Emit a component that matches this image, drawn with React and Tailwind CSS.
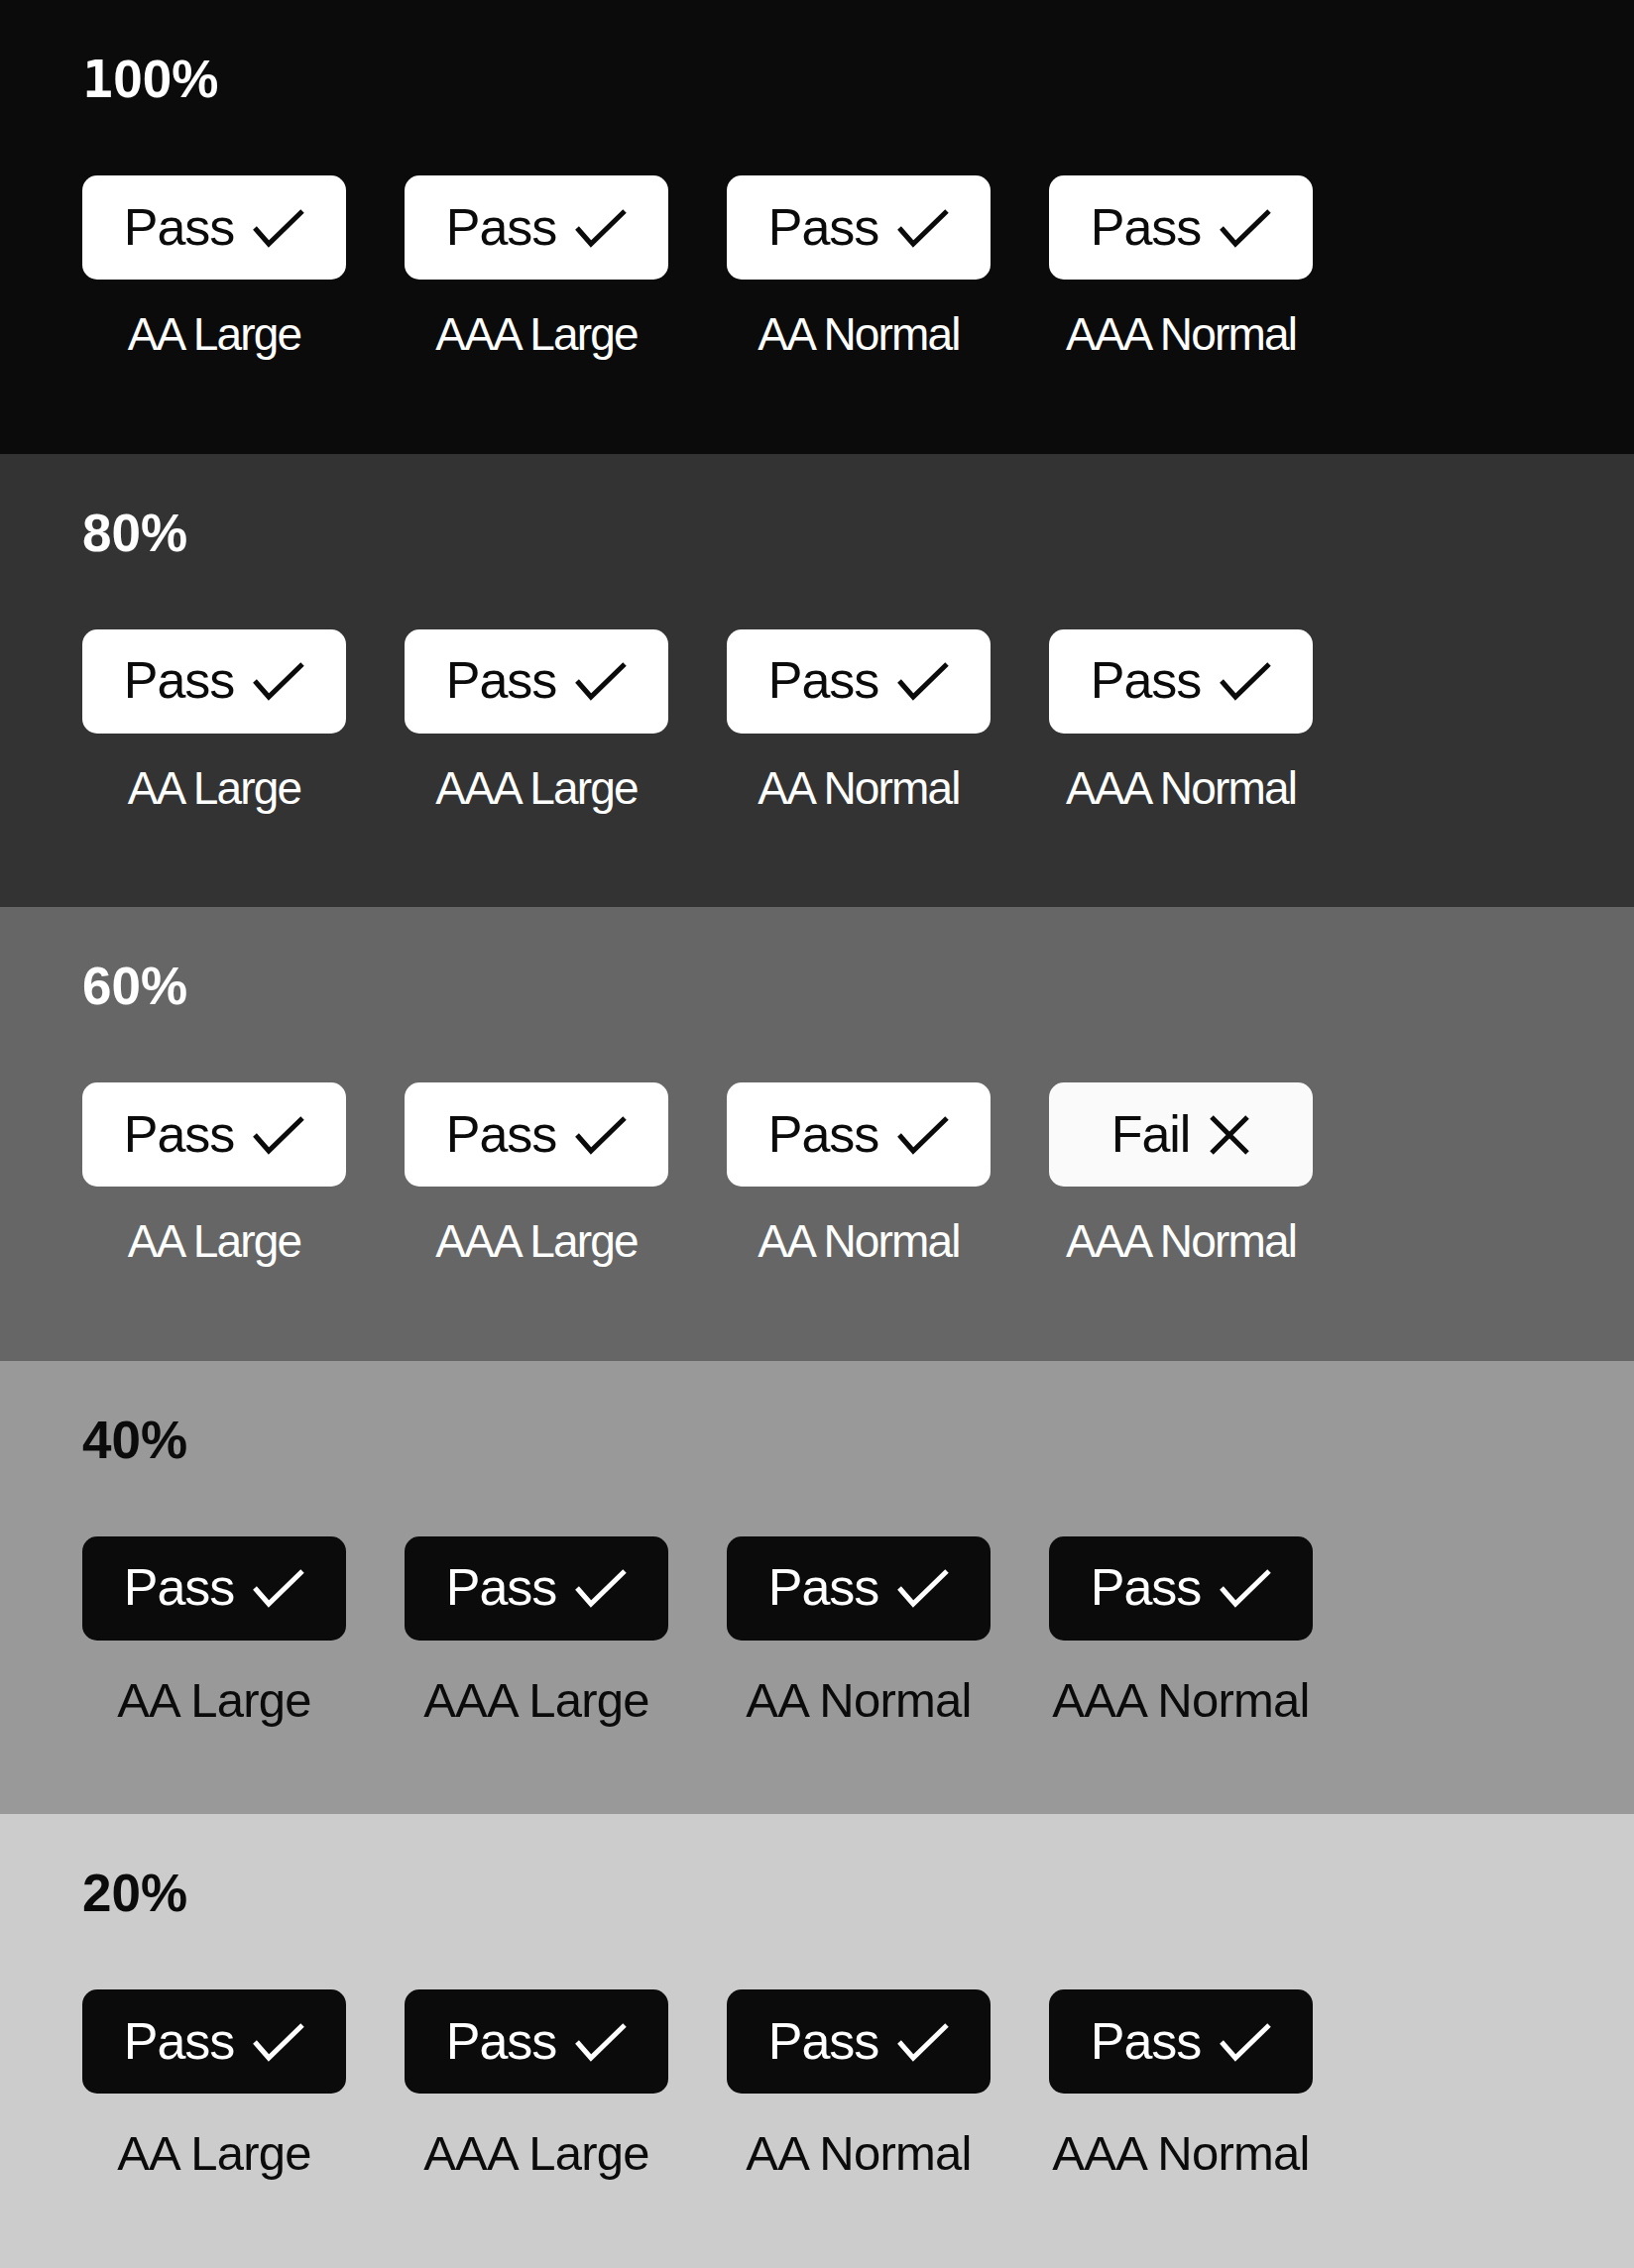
const levels = [
  { pct: '100%', bg: 'bg-[#0b0b0b]', dark: true, fail: false },
  { pct: '80%', bg: 'bg-[#333333]', dark: true, fail: false },
  { pct: '60%', bg: 'bg-[#666666]', dark: true, fail: true },
  { pct: '40%', bg: 'bg-[#999999]', dark: false, fail: false },
  { pct: '20%', bg: 'bg-[#cccccc]', dark: false, fail: false },
];

const labels = ['AA Large', 'AAA Large', 'AA Normal', 'AAA Normal'];

function Check({ className }) {
  return (
    <svg width="52" height="42" viewBox="0 0 52 42" fill="none" className={className}>
      <path d="M2 21 L16 37 L50 4" stroke="currentColor" strokeWidth="5" />
    </svg>
  );
}

function Cross({ className }) {
  return (
    <svg width="42" height="40" viewBox="0 0 42 40" fill="none" className={className}>
      <path d="M3 2 L39 38 M39 2 L3 38" stroke="currentColor" strokeWidth="5" />
    </svg>
  );
}

function Badge({ dark, fail }) {
  const box = dark
    ? fail
      ? 'bg-[#fafafa] text-[#0b0b0b]'
      : 'bg-white text-[#0b0b0b]'
    : 'bg-[#0b0b0b] text-white';
  return (
    <div className={`w-[266px] h-[105px] rounded-[15px] flex items-center justify-center gap-[19px] ${box}`}>
      <span className="text-[52px] leading-none tracking-[-0.02em] pb-[2px]">{fail ? 'Fail' : 'Pass'}</span>
      {fail ? <Cross /> : <Check />}
    </div>
  );
}

function Title({ pct, dark }) {
  const color = dark ? 'text-white' : 'text-[#0b0b0b]';
  const first = pct.startsWith('1');
  return (
    <h2 className={`text-[53px] leading-none font-bold ${color}`}>
      {first ? (
        <>
          <span className="font-['DejaVu_Sans_Mono',monospace] text-[52px]">1</span>
          {pct.slice(1)}
        </>
      ) : (
        pct
      )}
    </h2>
  );
}

export default function App() {
  return (
    <div className="w-[1648px] h-[2288px] flex flex-col font-['Liberation_Sans',Arial,sans-serif]">
      {levels.map((lv) => (
        <section key={lv.pct} className={`flex-1 pl-[83px] pt-[53px] ${lv.bg}`}>
          <Title pct={lv.pct} dark={lv.dark} />
          <div className="mt-[71px] flex gap-[59px]">
            {labels.map((l, i) => (
              <div key={l} className="flex flex-col items-center">
                <Badge dark={lv.dark} fail={lv.fail && i === 3} />
                {lv.dark ? (
                  <span className="mt-[32px] text-[46px] leading-none tracking-[-0.04em] text-white whitespace-nowrap">{l}</span>
                ) : (
                  <span className="mt-[36px] text-[49px] leading-none tracking-[-0.015em] text-[#0b0b0b] whitespace-nowrap">{l}</span>
                )}
              </div>
            ))}
          </div>
        </section>
      ))}
    </div>
  );
}
